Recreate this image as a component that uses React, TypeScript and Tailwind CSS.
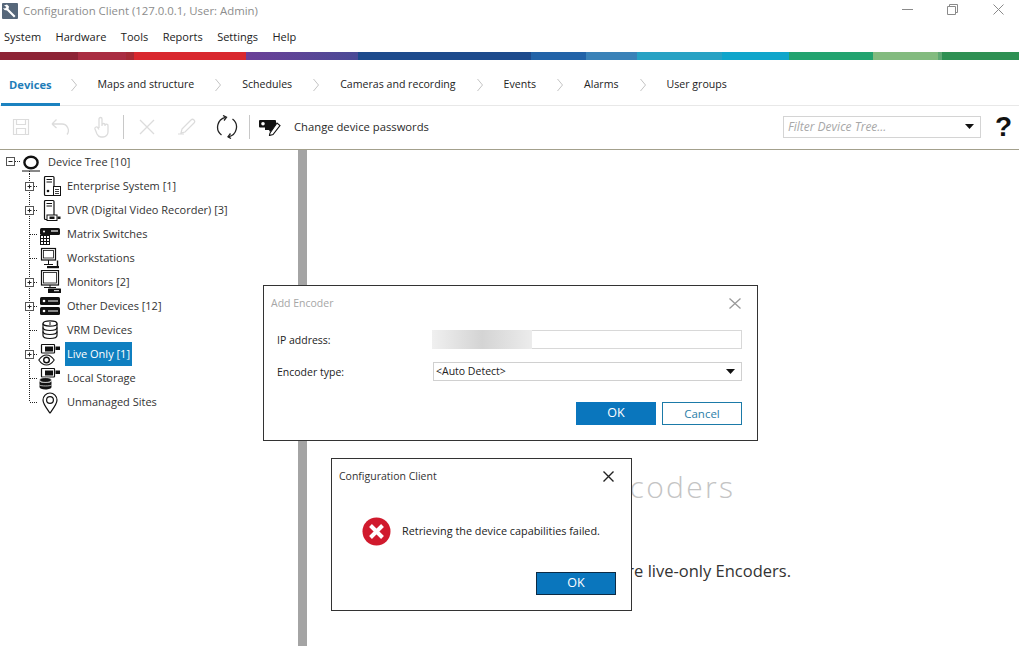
import React from "react";

const segs: [string, string][] = [
  ["w-[78px]", "bg-[#8d2436]"],
  ["w-[48px]", "bg-[#a92d42]"],
  ["w-[8px]", "bg-[#a52a35]"],
  ["w-[112px]", "bg-[#d9272e]"],
  ["w-[112px]", "bg-gradient-to-r from-[#6b3f97] to-[#4a4a96]"],
  ["w-[173px]", "bg-[#1d4a8c]"],
  ["w-[55px]", "bg-[#2263a8]"],
  ["w-[51px]", "bg-[#3a82b8]"],
  ["w-[85px]", "bg-[#27a2c4]"],
  ["w-[67px]", "bg-[#0fa5cb]"],
  ["w-[84px]", "bg-[#22a36f]"],
  ["w-[65px]", "bg-[#83bb7f]"],
  ["w-[4px]", "bg-[#5fa874]"],
  ["w-[77px]", "bg-[#2e9053]"],
];

function Chevron() {
  return (
    <svg width="6" height="14" viewBox="0 0 6 14" className="shrink-0">
      <path d="M0.5 1 L5.5 7 L0.5 13" fill="none" stroke="#c4c4c4" strokeWidth="1" />
    </svg>
  );
}

function Caret() {
  return (
    <svg width="9" height="5" viewBox="0 0 9 5">
      <path d="M0 0 H9 L4.5 5 Z" fill="#111" />
    </svg>
  );
}

function Guide({ last, expander }: { last?: boolean; expander?: boolean }) {
  return (
    <svg width="38" height="24" viewBox="0 0 38 24" className="shrink-0">
      <path d={last ? "M29.5 0 V12" : "M29.5 0 V24"} stroke="#222" strokeWidth="1" strokeDasharray="1 1" fill="none" />
      <path d="M30 12.5 H38" stroke="#222" strokeWidth="1" strokeDasharray="1 1" fill="none" />
      {expander && (
        <g>
          <rect x="25.5" y="8.5" width="8" height="8" fill="#fff" stroke="#555" />
          <path d="M27.5 12.5 H31.5 M29.5 10.5 V14.5" stroke="#222" />
        </g>
      )}
    </svg>
  );
}

const iconProps = { width: 24, height: 24, viewBox: "0 0 24 24", className: "shrink-0", fill: "none" };

function IconEnterprise() {
  return (
    <svg {...iconProps}>
      <rect x="6.5" y="2.5" width="9.5" height="19" rx="1" stroke="#111" strokeWidth="1.2" />
      <path d="M8.5 5.5 H14 M8.5 8 H14" stroke="#111" />
      <circle cx="10" cy="17" r="1.3" fill="#111" />
      <rect x="15.5" y="12.5" width="7" height="9" fill="#fff" stroke="#111" />
      <path d="M17 15.5 H21 M17 17.5 H21 M17 19.5 H21" stroke="#111" strokeWidth="0.8" />
    </svg>
  );
}
function IconDvr() {
  return (
    <svg {...iconProps}>
      <rect x="6.5" y="2.5" width="9.5" height="19" rx="1" stroke="#111" strokeWidth="1.2" />
      <path d="M8.5 5.5 H14 M8.5 8 H14" stroke="#111" />
      <rect x="9" y="17" width="10" height="5.5" fill="#fff" stroke="#111" />
      <rect x="11.5" y="18.5" width="5" height="2.5" fill="#111" />
      <rect x="19.5" y="18.5" width="3" height="2.5" fill="#111" />
    </svg>
  );
}
function IconMatrix() {
  return (
    <svg {...iconProps}>
      <rect x="2" y="6" width="20" height="7" rx="1.5" fill="#111" />
      <path d="M13 9 H20" stroke="#fff" strokeWidth="1.2" />
      <circle cx="6" cy="9.5" r="1" fill="#fff" />
      <rect x="2.5" y="13.5" width="9" height="9" fill="#fff" stroke="#111" />
      <path d="M5.5 13.5 V22.5 M8.5 13.5 V22.5 M2.5 16.5 H11.5 M2.5 19.5 H11.5" stroke="#111" />
    </svg>
  );
}
function IconWorkstation() {
  return (
    <svg {...iconProps}>
      <rect x="3.5" y="2.5" width="14" height="11.5" stroke="#111" strokeWidth="1.2" />
      <rect x="5.5" y="4.5" width="10" height="7.5" stroke="#111" strokeWidth="0.8" />
      <path d="M10.5 14 V18 M6 18.5 H15" stroke="#111" />
      <rect x="9" y="20" width="12" height="2.2" fill="#111" />
      <path d="M19.5 14.5 V20" stroke="#111" strokeWidth="1.4" />
    </svg>
  );
}
function IconMonitor() {
  return (
    <svg {...iconProps}>
      <rect x="3.5" y="0.5" width="17" height="14.5" stroke="#111" strokeWidth="1.2" />
      <rect x="5.5" y="2.5" width="13" height="10.5" stroke="#111" strokeWidth="0.8" />
      <path d="M12 15 V18 M6 17.5 H18" stroke="#111" />
      <rect x="10" y="18.5" width="13" height="4.5" rx="0.5" fill="#111" />
      <path d="M16 20.7 H21" stroke="#fff" />
    </svg>
  );
}
function IconOther() {
  return (
    <svg {...iconProps}>
      <rect x="2" y="3" width="20" height="8" rx="1.5" fill="#111" />
      <rect x="2" y="13" width="20" height="8" rx="1.5" fill="#111" />
      <circle cx="6" cy="7" r="1.3" fill="#fff" />
      <circle cx="6" cy="17" r="1.3" fill="#fff" />
      <path d="M10 7 H20 M10 17 H20" stroke="#fff" strokeWidth="1.1" />
    </svg>
  );
}
function IconVrm() {
  return (
    <svg {...iconProps}>
      <ellipse cx="12" cy="5.5" rx="7" ry="2.7" stroke="#111" strokeWidth="1.2" />
      <path d="M5 5.5 V17.5 C5 19.5 8 20.5 12 20.5 C16 20.5 19 19.5 19 17.5 V5.5" stroke="#111" strokeWidth="1.2" />
      <path d="M5 9.5 C5 11.5 8 12.5 12 12.5 C16 12.5 19 11.5 19 9.5 M5 13.5 C5 15.5 8 16.5 12 16.5 C16 16.5 19 15.5 19 13.5" stroke="#111" strokeWidth="1.2" />
      <path d="M12 4 V7" stroke="#111" />
    </svg>
  );
}
function CamSmall() {
  return (
    <g>
      <rect x="3.5" y="2.5" width="13" height="8.5" rx="0.5" fill="#fff" stroke="#111" strokeWidth="1.2" />
      <rect x="7" y="4.5" width="8" height="5" fill="#111" />
      <rect x="17.5" y="4.5" width="4.5" height="3.5" fill="#111" />
    </g>
  );
}
function IconLive() {
  return (
    <svg {...iconProps}>
      <CamSmall />
      <path d="M0.8 18 C3.5 14 6 13 8.5 13 C11 13 13.5 14 16.2 18 C13.5 22 11 23 8.5 23 C6 23 3.5 22 0.8 18 Z" stroke="#111" strokeWidth="1.1" />
      <circle cx="8.5" cy="18" r="2.8" stroke="#111" strokeWidth="1.4" />
    </svg>
  );
}
function IconLocal() {
  return (
    <svg {...iconProps}>
      <CamSmall />
      <ellipse cx="7.5" cy="14" rx="6" ry="2.4" fill="#111" stroke="#fff" strokeWidth="0.6" />
      <path d="M1.5 15 V21 C1.5 22.5 4 23.5 7.5 23.5 C11 23.5 13.5 22.5 13.5 21 V15 C13.5 16.3 11 17 7.5 17 C4 17 1.5 16.3 1.5 15 Z" fill="#111" />
      <path d="M1.5 19 C3 20.3 12 20.3 13.5 19" stroke="#fff" strokeWidth="0.7" />
    </svg>
  );
}
function IconPin() {
  return (
    <svg {...iconProps}>
      <path d="M12 23 C8 17.5 5 14 5 10 A7 7 0 0 1 19 10 C19 14 16 17.5 12 23 Z" stroke="#111" strokeWidth="1.2" />
      <circle cx="12" cy="10" r="3.4" stroke="#111" strokeWidth="1.2" />
    </svg>
  );
}

const rows: { label: string; Icon: () => React.ReactElement; exp?: boolean; sel?: boolean; last?: boolean }[] = [
  { label: "Enterprise System [1]", Icon: IconEnterprise, exp: true },
  { label: "DVR (Digital Video Recorder) [3]", Icon: IconDvr, exp: true },
  { label: "Matrix Switches", Icon: IconMatrix },
  { label: "Workstations", Icon: IconWorkstation },
  { label: "Monitors [2]", Icon: IconMonitor, exp: true },
  { label: "Other Devices [12]", Icon: IconOther, exp: true },
  { label: "VRM Devices", Icon: IconVrm },
  { label: "Live Only [1]", Icon: IconLive, exp: true, sel: true },
  { label: "Local Storage", Icon: IconLocal },
  { label: "Unmanaged Sites", Icon: IconPin, last: true },
];

const tabs = ["Maps and structure", "Schedules", "Cameras and recording", "Events", "Alarms", "User groups"];
const menus = ["System", "Hardware", "Tools", "Reports", "Settings", "Help"];

function Toolbar() {
  const g = "#dcdcdc";
  return (
    <div className="flex items-center h-[43px] shrink-0 pl-[12px] pr-[8px] pb-[2px]">
      <svg width="18" height="18" viewBox="0 0 18 18" fill="none" stroke={g} strokeWidth="1.2" className="shrink-0">
        <path d="M1.5 1.5 H16.5 V16.5 H1.5 Z M4.5 1.5 V6.5 H13.5 V1.5 M4.5 16.5 V10.5 H13.5 V16.5" />
      </svg>
      <svg width="20" height="18" viewBox="0 0 20 18" fill="none" stroke={g} strokeWidth="1.3" className="shrink-0 ml-[21px]">
        <path d="M1 6 H11 A6.5 6.5 0 0 1 16 16.5 M1 6 L5.5 1.5 M1 6 L5.5 10" />
      </svg>
      <svg width="16" height="22" viewBox="0 0 16 22" fill="none" stroke={g} strokeWidth="1.3" className="shrink-0 ml-[23px]">
        <path d="M5 12 V3 A1.5 1.5 0 0 1 8 3 V10 M8 9 A1.5 1.5 0 0 1 11 9 V10 M11 9.5 A1.5 1.5 0 0 1 14 10 V16 A5 5 0 0 1 9 21 H7 A5 5 0 0 1 3 18 L1 13 A1.5 1.5 0 0 1 4 12 L5 13.5" />
      </svg>
      <div className="w-px h-[24px] bg-[#c8c8c8] ml-[13px] shrink-0" />
      <svg width="16" height="16" viewBox="0 0 16 16" stroke={g} strokeWidth="1.3" className="shrink-0 ml-[15px]">
        <path d="M1 1 L15 15 M15 1 L1 15" />
      </svg>
      <svg width="19" height="17" viewBox="0 0 19 17" fill="none" stroke={g} strokeWidth="1.2" className="shrink-0 ml-[22px]">
        <path d="M5 11 L14 2 A1.6 1.6 0 0 1 17 5 L8 14 L4 15 Z M1 16 H7" />
      </svg>
      <svg width="22" height="24" viewBox="0 0 22 24" fill="none" stroke="#222" strokeWidth="1.3" className="shrink-0 ml-[20px]">
        <path d="M5.5 20 A10 10 0 0 1 9.5 2.3 M12.5 21.8 A10 10 0 0 0 16.5 4" />
        <path d="M7 0.5 L10.5 2.3 L8 5.5 M15 23.5 L12 21.7 L14.5 18.5" />
      </svg>
      <div className="w-px h-[24px] bg-[#c8c8c8] ml-[11px] shrink-0" />
      <svg width="22" height="18" viewBox="0 0 22 18" className="shrink-0 ml-[9px]">
        <rect x="0" y="2" width="17" height="7.5" rx="1" fill="#111" />
        <circle cx="4" cy="5.7" r="1.8" fill="#fff" />
        <path d="M14 9 L6 9 V12 H10 L11 14 L17 9 Z" fill="#111" />
        <path d="M11 15 L18 5 L21 7.5 L14 16.5 L10.5 17.5 Z" fill="#fff" stroke="#111" strokeWidth="1.1" />
      </svg>
      <span className="ml-[13px] pt-[2px] text-[11.25px] text-[#2a2a2a]">Change device passwords</span>
      <div className="ml-auto flex items-center w-[198px] h-[22px] border border-[#d4d4d4] pl-[4px] pr-[6px]">
        <span className="text-[12px] italic text-[#a8a8a8]">Filter Device Tree...</span>
        <span className="ml-auto flex"><Caret /></span>
      </div>
      <span className="ml-[14px] w-[16px] text-[28px] leading-none font-bold font-['Liberation_Sans',sans-serif] text-[#111]">?</span>
    </div>
  );
}

function Button({ children, dark }: { children: React.ReactNode; dark?: boolean }) {
  return (
    <div className={`w-[80px] h-[23px] flex items-center justify-center bg-[#0a76bd] text-white text-[12.5px] ${dark ? "border border-[#0c2b45]" : ""}`}>
      {children}
    </div>
  );
}

export default function App() {
  return (
    <div className="relative w-[1019px] h-[646px] overflow-hidden bg-white font-['Open_Sans',sans-serif] flex flex-col">
      {/* title bar */}
      <div className="flex items-center h-[24px] shrink-0 pl-[2px] pb-[2px]">
        <svg width="16" height="16" viewBox="0 0 16 16" className="shrink-0 mb-[1px]">
          <rect width="16" height="16" rx="1" fill="#56677a" />
          <path d="M2 2.5 L5 1.5 L7 3.5 L6.5 6 L13.5 13 L12 14.5 L5 7.5 L2.5 7 L1 5 L3 5.5 L4.5 4 Z" fill="#fff" />
        </svg>
        <span className="ml-[5px] text-[11.4px] text-[#8c8c8c]">Configuration Client (127.0.0.1, User: Admin)</span>
        <div className="ml-auto flex items-center h-full pr-[15px] pb-[3px]">
          <svg width="11" height="11" viewBox="0 0 11 11" stroke="#8a8a8a" fill="none">
            <path d="M0 5.5 H11" />
          </svg>
          <svg width="11" height="11" viewBox="0 0 11 11" stroke="#8a8a8a" fill="none" className="ml-[34px]">
            <path d="M0.5 2.5 H8.5 V10.5 H0.5 Z M2.5 2.5 V0.5 H10.5 V8.5 H8.5" />
          </svg>
          <svg width="11" height="11" viewBox="0 0 11 11" stroke="#8a8a8a" fill="none" className="ml-[35px]">
            <path d="M0.5 0.5 L10.5 10.5 M10.5 0.5 L0.5 10.5" />
          </svg>
        </div>
      </div>
      {/* menu */}
      <div className="flex items-center gap-[14.5px] h-[28px] shrink-0 pl-[4px] pb-[2px] text-[11px] text-[#222]">
        {menus.map((m) => (
          <span key={m}>{m}</span>
        ))}
      </div>
      {/* colour strip */}
      <div className="flex h-[8px] shrink-0">
        {segs.map(([w, c], i) => (
          <div key={i} className={`${w} ${c} shrink-0`} />
        ))}
      </div>
      {/* tabs */}
      <div className="relative flex items-center gap-[21px] h-[46px] shrink-0 pl-[9px] pt-[5px] border-b border-[#e8e8e8] text-[10.6px] text-[#222]">
        <span className="font-bold text-[11.2px] text-[#1f7db8] -mr-[2px]">Devices</span>
        <Chevron />
        {tabs.map((t, i) => (
          <React.Fragment key={t}>
            <span>{t}</span>
            {i < tabs.length - 1 && <Chevron />}
          </React.Fragment>
        ))}
        <div className="absolute left-[1px] bottom-[-1px] w-[59px] h-[3px] bg-[#1b82c0]" />
      </div>
      <Toolbar />
      <div className="h-px bg-[#a3a08c] shrink-0" />
      {/* main */}
      <div className="flex flex-1 min-h-0">
        <div className="w-[298px] shrink-0 text-[11px] text-[#333]">
          <div className="flex items-center h-[24px]">
            <svg width="48" height="24" viewBox="0 0 48 24" className="shrink-0" fill="none">
              <rect x="6.5" y="7.5" width="8" height="8" stroke="#555" />
              <path d="M8.5 11.5 H12.5" stroke="#222" />
              <path d="M15 11.5 H20" stroke="#222" strokeDasharray="1 1" />
              <ellipse cx="31" cy="12.5" rx="6.6" ry="5.8" stroke="#111" strokeWidth="2.4" />
              <path d="M22 21 H40" stroke="#111" />
              <path d="M29.5 21 V24" stroke="#222" strokeDasharray="1 1" />
            </svg>
            <span>Device Tree [10]</span>
          </div>
          {rows.map(({ label, Icon, exp, sel, last }) => (
            <div key={label} className="flex items-center h-[24px]">
              <Guide expander={exp} last={last} />
              <Icon />
              <span className={`ml-[3px] px-[2px] h-[24px] flex items-center ${sel ? "bg-[#0f7fc0] text-white" : ""}`}>{label}</span>
            </div>
          ))}
        </div>
        <div className="w-[9px] shrink-0 bg-[#a4a4a4]" />
        <div className="flex-1 flex flex-col items-center pt-[317px]">
          <div className="text-[30px] leading-[40px] font-light tracking-[2.3px] text-[#c4c4c4]">Encoders</div>
          <div className="mt-[52px] self-end mr-[228px] text-[16.5px] leading-[24px] text-[#333]">are live-only Encoders.</div>
        </div>
      </div>

      {/* Add Encoder window */}
      <div className="absolute left-[263px] top-[285px] w-[495px] h-[156px] bg-white border border-[#333] flex flex-col text-[10.5px] text-[#222]">
        <div className="flex items-center justify-between h-[34px] pl-[7px] pr-[16px] shrink-0">
          <span className="text-[#a6a6a6] pt-[2px]">Add Encoder</span>
          <svg width="12" height="11" viewBox="0 0 12 11" stroke="#999" strokeWidth="1.3">
            <path d="M0.5 0.5 L11.5 10.5 M11.5 0.5 L0.5 10.5" />
          </svg>
        </div>
        <div className="flex items-center h-[20px] mt-[9px] pl-[13px] pr-[15px]">
          <span className="w-[155px] shrink-0 pt-[3px]">IP address:</span>
          <div className="flex-1 h-[19px] border border-[#d8d8d8] flex">
            <div className="w-[100px] -ml-px -mt-px h-[19px] bg-gradient-to-r from-[#f0f0f0] via-[#d4d4d4] to-[#ececec]" />
          </div>
        </div>
        <div className="flex items-center h-[20px] mt-[12px] pl-[13px] pr-[15px]">
          <span className="w-[156px] shrink-0 pt-[3px]">Encoder type:</span>
          <div className="flex-1 h-[19px] border border-[#d0d0d0] flex items-center pl-[2px] pr-[6px]">
            <span className="pt-[2px]">&lt;Auto Detect&gt;</span>
            <span className="ml-auto flex"><Caret /></span>
          </div>
        </div>
        <div className="flex justify-end gap-[6px] mt-[21px] pr-[15px]">
          <Button>OK</Button>
          <div className="w-[80px] h-[23px] flex items-center justify-center border border-[#1b7aa8] text-[#2a7ea8] text-[11.5px]">Cancel</div>
        </div>
      </div>

      {/* Message window */}
      <div className="absolute left-[331px] top-[458px] w-[301px] h-[153px] bg-white border border-[#333] flex flex-col text-[10.85px] text-[#222]">
        <div className="flex items-center justify-between h-[34px] pl-[7px] pr-[17px] shrink-0">
          <span className="text-[#333] text-[10.5px] pt-[2px]">Configuration Client</span>
          <svg width="11" height="11" viewBox="0 0 11 11" stroke="#222" strokeWidth="1.4">
            <path d="M0.5 0.5 L10.5 10.5 M10.5 0.5 L0.5 10.5" />
          </svg>
        </div>
        <div className="flex items-center mt-[24px] pl-[30px]">
          <svg width="29" height="29" viewBox="0 0 29 29" className="shrink-0">
            <circle cx="14.5" cy="14.5" r="14" fill="#d01a2d" />
            <path d="M8.5 8.5 L20.5 20.5 M20.5 8.5 L8.5 20.5" stroke="#fff" strokeWidth="4" />
          </svg>
          <span className="ml-[11px]">Retrieving the device capabilities failed.</span>
        </div>
        <div className="flex justify-end mt-[26px] pr-[15px]">
          <Button dark>OK</Button>
        </div>
      </div>
    </div>
  );
}
